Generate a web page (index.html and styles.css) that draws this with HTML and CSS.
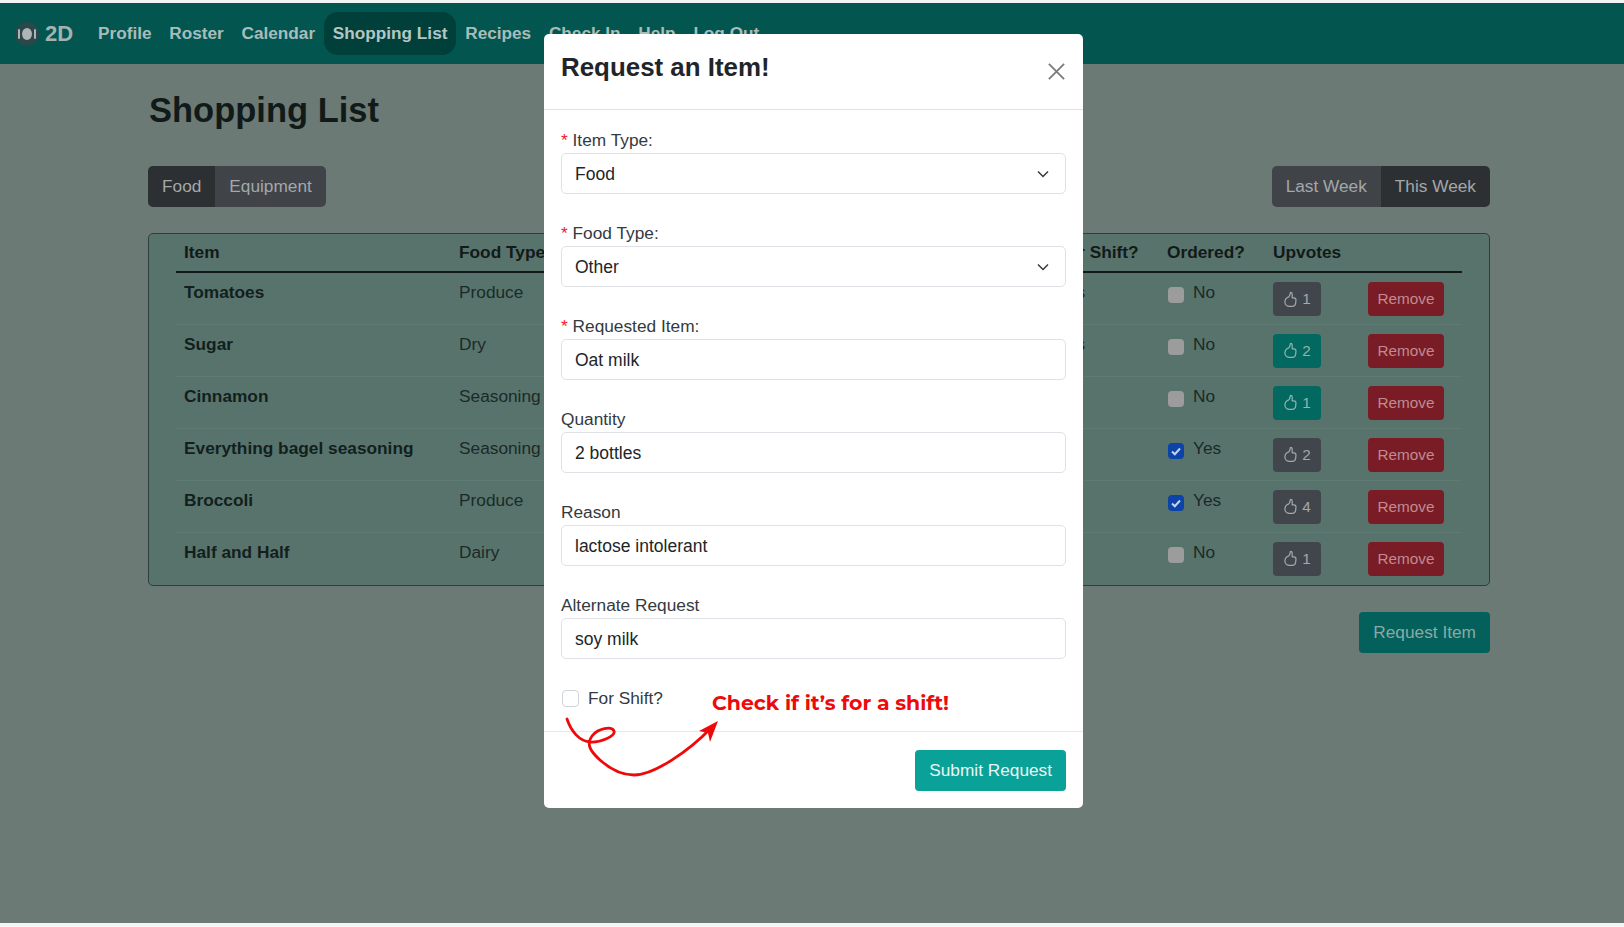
FILE: index.html
```html
<!DOCTYPE html>
<html lang="en">
<head>
<meta charset="utf-8">
<title>Shopping List</title>
<link rel="stylesheet" href="styles.css">
</head>
<body>
<svg class="defs" width="0" height="0" aria-hidden="true">
  <symbol id="thumb" viewBox="0 0 16 18">
    <path d="M8 1.500c1.200 0 1.800.9 1.800 2v3.700h1.700c1.500 0 2.500 1.100 2.300 2.600l-.3 3.200c-.2 1.900-1.700 3.300-3.700 3.300H7c-2.800 0-5-2.200-5-5 0-2.200 1.400-3.600 2.900-4.600C6.300 7.300 7.300 4.800 8 1.500z" fill="none" stroke="currentColor" stroke-width="1.300" stroke-linejoin="round"/>
  </symbol>
</svg>
<nav class="nav">
  <a class="brand"><svg class="logo" viewBox="0 0 26 26"><circle cx="13" cy="13" r="12" fill="#2a474a"/><ellipse cx="13" cy="13" rx="5" ry="6" fill="#aeb5b4"/><rect x="4" y="8" width="2" height="10" rx="1" fill="#aeb5b4"/><rect x="20" y="8" width="2" height="10" rx="1" fill="#aeb5b4"/></svg><span>2D</span></a>
  <a class="link">Profile</a>
  <a class="link">Roster</a>
  <a class="link">Calendar</a>
  <a class="link active">Shopping List</a>
  <a class="link">Recipes</a>
  <a class="link">Check In</a>
  <a class="link">Help</a>
  <a class="link">Log Out</a>
</nav>
<main class="page">
  <h1 class="title">Shopping List</h1>
  <div class="toolbar">
    <div class="group"><span class="seg on">Food</span><span class="seg">Equipment</span></div>
    <div class="group"><span class="seg">Last Week</span><span class="seg on">This Week</span></div>
  </div>
  <div class="card">
    <table class="table">
      <thead>
        <tr><th class="c1">Item</th><th class="c2">Food Type</th><th class="c3"></th><th class="c4">For Shift?</th><th class="c5">Ordered?</th><th class="c6">Upvotes</th><th class="c7"></th></tr>
      </thead>
      <tbody>
        <tr><td class="name">Tomatoes</td><td>Produce</td><td></td><td>Yes</td><td><span class="ord"><i class="cb"></i>No</span></td><td><span class="vote"><svg class="thumb"><use href="#thumb"/></svg>1</span></td><td><span class="remove">Remove</span></td></tr>
        <tr><td class="name">Sugar</td><td>Dry</td><td></td><td>Yes</td><td><span class="ord"><i class="cb"></i>No</span></td><td><span class="vote teal"><svg class="thumb"><use href="#thumb"/></svg>2</span></td><td><span class="remove">Remove</span></td></tr>
        <tr><td class="name">Cinnamon</td><td>Seasoning</td><td></td><td></td><td><span class="ord"><i class="cb"></i>No</span></td><td><span class="vote teal"><svg class="thumb"><use href="#thumb"/></svg>1</span></td><td><span class="remove">Remove</span></td></tr>
        <tr><td class="name">Everything bagel seasoning</td><td>Seasoning</td><td></td><td></td><td><span class="ord"><i class="cb checked"><svg viewBox="0 0 16 16"><path d="M4 8.500l2.800 2.700L12 5.500" fill="none" stroke="#c9d4e6" stroke-width="2"/></svg></i>Yes</span></td><td><span class="vote"><svg class="thumb"><use href="#thumb"/></svg>2</span></td><td><span class="remove">Remove</span></td></tr>
        <tr><td class="name">Broccoli</td><td>Produce</td><td></td><td></td><td><span class="ord"><i class="cb checked"><svg viewBox="0 0 16 16"><path d="M4 8.500l2.800 2.700L12 5.500" fill="none" stroke="#c9d4e6" stroke-width="2"/></svg></i>Yes</span></td><td><span class="vote"><svg class="thumb"><use href="#thumb"/></svg>4</span></td><td><span class="remove">Remove</span></td></tr>
        <tr><td class="name">Half and Half</td><td>Dairy</td><td></td><td></td><td><span class="ord"><i class="cb"></i>No</span></td><td><span class="vote"><svg class="thumb"><use href="#thumb"/></svg>1</span></td><td><span class="remove">Remove</span></td></tr>
      </tbody>
    </table>
  </div>
  <div class="actions"><span class="request">Request Item</span></div>
</main>
<div class="modal">
  <header class="m-head">
    <h2 class="m-title">Request an Item!</h2>
    <svg class="close" viewBox="0 0 20 20"><path d="M2 2l16 16M18 2L2 18" stroke="#7d7d7d" stroke-width="2" fill="none"/></svg>
  </header>
  <div class="m-body">
    <div class="field"><label class="lab"><b class="req">*</b> Item Type:</label><div class="input"><span>Food</span><svg class="chev" viewBox="0 0 12 8"><path d="M1 1.500l5 5 5-5" fill="none" stroke="#343a40" stroke-width="1.500"/></svg></div></div>
    <div class="field"><label class="lab"><b class="req">*</b> Food Type:</label><div class="input"><span>Other</span><svg class="chev" viewBox="0 0 12 8"><path d="M1 1.500l5 5 5-5" fill="none" stroke="#343a40" stroke-width="1.500"/></svg></div></div>
    <div class="field"><label class="lab"><b class="req">*</b> Requested Item:</label><div class="input"><span>Oat milk</span></div></div>
    <div class="field"><label class="lab">Quantity</label><div class="input"><span>2 bottles</span></div></div>
    <div class="field"><label class="lab">Reason</label><div class="input"><span>lactose intolerant</span></div></div>
    <div class="field"><label class="lab">Alternate Request</label><div class="input"><span>soy milk</span></div></div>
    <div class="shift"><i class="cb2"></i><span>For Shift?</span></div>
  </div>
  <footer class="m-foot"><span class="submit">Submit Request</span></footer>
  <div class="note">Check if it’s for a shift!</div>
  <svg class="arrow" viewBox="0 0 160 70">
    <path d="M3 3C7 15 15 25 26 26C36 27 52 20 50 15C48 10 34 12 28 20C22 28 26 35 36 44C46 53 58 59 70 59C90 59 125 35 147 12" fill="none" stroke="#ee0a0a" stroke-width="2.800" stroke-linecap="round"/>
    <path d="M154 5L135 15L144 17L146 26Z" fill="#ee0a0a"/>
  </svg>
</div>
</body>
</html>
```
FILE: styles.css
```css
* { box-sizing: border-box; }
html, body { margin: 0; height: 927px; overflow: hidden; }
body {
  background: #6b7a75;
  font-family: "Liberation Sans", Arial, sans-serif;
  font-size: 17.300px;
  color: #14201f;
  border-top: 3px solid #f2f5f5;
  border-bottom: 4px solid #f4f6f6;
  position: relative;
}
.defs { position: absolute; }
.nav {
  height: 61px;
  background: #03564f;
  display: flex;
  align-items: center;
  padding-left: 14px;
  color: #a9bcb9;
  font-weight: 700;
  font-size: 17.200px;
}
.brand { display: flex; align-items: center; gap: 5px; font-size: 22px; margin-right: 16px; color: #a4b3b1; }
.logo { width: 26px; height: 26px; }
.link { padding: 0 8.900px; line-height: 43px; height: 43px; border-radius: 14px; }
.active { background: #013f3a; color: #b4c6c3; }
.page { padding: 0 134px 0 148px; }
.title { margin: 25px 0 0 1px; font-size: 34.500px; line-height: 42px; color: #121a19; font-weight: 700; }
.toolbar { display: flex; justify-content: space-between; margin-top: 35px; }
.group { display: flex; border-radius: 5px; overflow: hidden; }
.seg { background: #404449; color: #a3a8aa; font-size: 17.250px; height: 41px; line-height: 41px; padding: 0 14px; }
.seg.on { background: #2c3033; }
.card { margin-top: 26px; border: 1px solid #2d3f3b; border-radius: 5px; background: #58736c; height: 353px; padding: 0 27px 0 27px; }
.table { width: 100%; border-collapse: collapse; table-layout: fixed; }
.table th { text-align: left; font-size: 17.300px; height: 38px; padding: 0 0 0 8px; border-bottom: 2px solid #121a19; color: #121a19; white-space: nowrap; }
.table td { height: 52px; padding: 0 0 0 8px; vertical-align: top; border-bottom: 1px solid #5f7a73; color: #1b2a28; }
.table tr:last-child td { border-bottom: 0; }
.table td:not(:nth-child(6)):not(:nth-child(7)) { padding-top: 9px; }
.table td:nth-child(6), .table td:nth-child(7) { padding-top: 9px; }
.table .name { font-weight: 700; color: #121f1d; }
.c1 { width: 275px; }
.c2 { width: 120px; }
.c3 { width: 478px; }
.c4 { width: 110px; }
.c5 { width: 106px; }
.c6 { width: 95px; }
.ord { display: flex; align-items: flex-start; gap: 9px; }
.cb { width: 16px; height: 16px; background: #9c9c9c; border-radius: 4px; margin: 5px 0 0 1px; display: block; }
.cb.checked { background: #0b43a8; }
.cb svg { display: block; }
.vote { display: inline-flex; align-items: center; justify-content: center; gap: 4px; width: 48px; height: 34px; border-radius: 4px; background: #41464c; color: #a3a8aa; font-size: 15.300px; }
.vote.teal { background: #03685f; color: #8db6b1; }
.thumb { width: 15px; height: 17px; }
.remove { display: inline-block; width: 76px; height: 34px; line-height: 34px; text-align: center; background: #7a1c25; color: #c08b91; border-radius: 4px; font-size: 15.300px; }
.actions { display: flex; justify-content: flex-end; margin-top: 26px; }
.request { background: #03605a; color: #8aaaa7; height: 41px; line-height: 41px; padding: 0 14px; border-radius: 4px; font-size: 17.300px; }
.modal { position: absolute; left: 544px; top: 31px; width: 539px; height: 774px; background: #fff; border-radius: 5px; color: #2c3136; }
.m-head { height: 76px; border-bottom: 1px solid #dee2e6; padding: 17px 17px 0 17px; display: flex; justify-content: space-between; }
.m-title { margin: 0; font-size: 25.900px; line-height: 32px; font-weight: 700; color: #212529; }
.close { width: 19px; height: 19px; margin-top: 11px; }
.m-body { padding: 19px 17px 0; }
.field { height: 93px; }
.lab { display: block; font-size: 17.300px; line-height: 22px; height: 24px; color: #343a40; }
.req { color: #f0192b; font-weight: 400; }
.input { height: 41px; border: 1px solid #dee2e6; border-radius: 5px; padding: 1px 13px 0; display: flex; align-items: center; justify-content: space-between; font-size: 17.500px; color: #212529; }
.chev { width: 12px; height: 8px; margin-right: 3px; }
.shift { display: flex; gap: 9px; align-items: center; margin: 1px 0 0 1px; font-size: 17.300px; color: #343a40; }
.cb2 { width: 17px; height: 17px; border: 1px solid #ced4da; border-radius: 4px; display: block; }
.m-foot { position: absolute; left: 0; right: 0; top: 697px; height: 77px; border-top: 1px solid #e5e8ea; display: flex; justify-content: flex-end; align-items: center; padding-right: 17px; }
.submit { background: #0aa198; color: #e6f6f4; height: 41px; line-height: 41px; padding: 0 14px; border-radius: 4px; font-size: 17.250px; }
.note { position: absolute; left: 168px; top: 656px; color: #ee0a0a; font: 700 20.400px "Montserrat", "Inter", "Noto Sans", sans-serif; white-space: nowrap; }
.arrow { position: absolute; left: 20px; top: 682px; width: 160px; height: 70px; }
```
